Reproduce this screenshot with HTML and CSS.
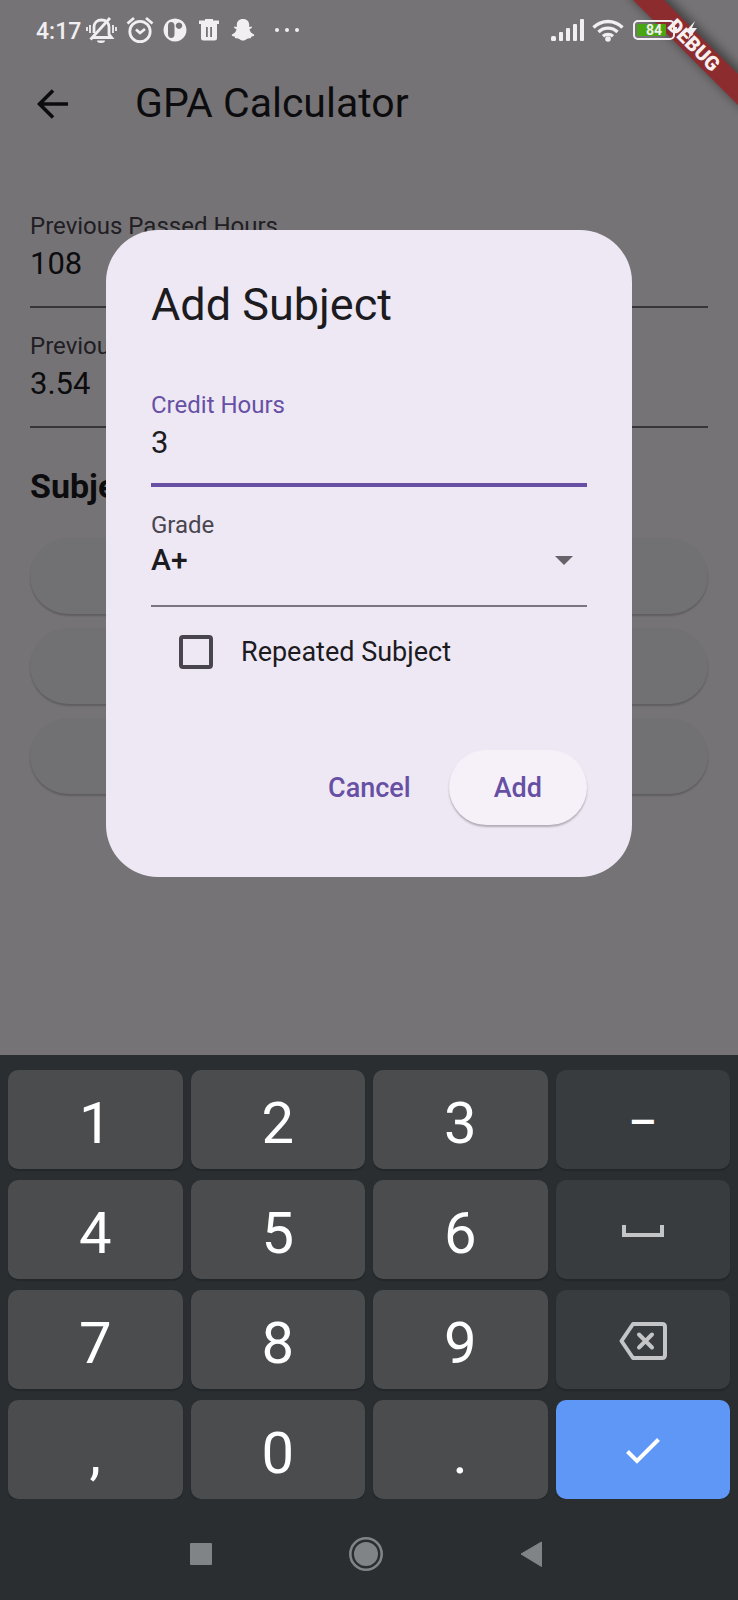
FILE: index.html
```html
<!DOCTYPE html>
<html lang="en">
<head>
<meta charset="utf-8">
<meta name="viewport" content="width=device-width, initial-scale=1">
<title>GPA Calculator</title>
<link rel="stylesheet" href="styles.css">
</head>
<body>
<div class="phone">
  <div class="app">
    <main class="screen">
      <header class="appbar">
        <button class="back" type="button" aria-label="Back">
          <svg width="32" height="30" viewBox="0 0 32 30" fill="none" stroke="currentColor" stroke-width="3.6"><path d="M31 15H3M16 1.5L2.5 15 16 28.5"/></svg>
        </button>
        <h1 class="appbar-title">GPA Calculator</h1>
      </header>
      <div class="content">
        <div class="field">
          <label class="field-label" for="hours">Previous Passed Hours</label>
          <input class="field-input" id="hours" type="text" value="108">
        </div>
        <div class="field">
          <label class="field-label" for="gpa">Previous GPA</label>
          <input class="field-input" id="gpa" type="text" value="3.54">
        </div>
        <h2 class="section-title">Subjects</h2>
        <div class="pills">
          <button class="pill" type="button" aria-label="Add subject"></button>
          <button class="pill" type="button" aria-label="Calculate"></button>
          <button class="pill" type="button" aria-label="Reset"></button>
        </div>
      </div>
    </main>

    <div class="scrim">
      <form class="dialog" role="dialog" aria-labelledby="dialog-title">
        <h2 class="dialog-title" id="dialog-title">Add Subject</h2>
        <div class="field field-active">
          <label class="field-label" for="credit">Credit Hours</label>
          <input class="field-input" id="credit" type="text" value="3">
        </div>
        <div class="field field-grade">
          <label class="field-label" for="grade">Grade</label>
          <div class="select-row">
            <select class="field-select" id="grade"><option>A+</option><option>A</option><option>B+</option></select>
            <svg class="caret" width="18" height="10" viewBox="0 0 18 10"><path d="M0 0h18L9 9z" fill="#676169"/></svg>
          </div>
        </div>
        <label class="check-row" for="repeated">
          <input class="check" id="repeated" type="checkbox">
          <span>Repeated Subject</span>
        </label>
        <div class="actions">
          <button class="btn btn-text" type="button">Cancel</button>
          <button class="btn btn-raised" type="button">Add</button>
        </div>
      </form>
    </div>

    <svg class="ribbon" width="120" height="120" viewBox="0 0 120 120">
      <defs><filter id="soft" x="-20%" y="-20%" width="140%" height="140%"><feGaussianBlur stdDeviation="5"/></filter></defs>
      <path d="M8 -7L46 -7 127 74 127 112z" fill="#000" opacity=".4" filter="url(#soft)"/>
      <path d="M15 0H46L120 74V105z" fill="#8d2c2f"/>
      <text class="ribbon-text" x="0" y="7" text-anchor="middle" transform="translate(76 45) rotate(45)">DEBUG</text>
    </svg>

    <div class="statusbar">
      <span class="clock">4:17</span>
      <svg width="32" height="28" viewBox="0 0 32 28" fill="none" stroke="currentColor" stroke-width="2.8">
        <path d="M7 21.5h19.5L24 18.5V11c0-4-3-7-7.500-7S9 7 9 11v6" /><path d="M5.500 23.500L25 2"/><path d="M12 24.500a4 2.500 0 0 0 8 0z" fill="currentColor" stroke="none"/>
        <path d="M5 9v8M2 11v4M28 9v8M31 11v4" stroke-width="1.800"/>
      </svg>
      <svg class="st-alarm" width="28" height="28" viewBox="0 0 28 28" fill="none" stroke="currentColor" stroke-width="2.800">
        <circle cx="14" cy="15.500" r="10.200"/><path d="M10 13.500l4 3.500 5-4M1.500 7.500L8 2M26.500 7.500L20 2"/>
      </svg>
      <svg class="st-p" width="24" height="24" viewBox="0 0 24 24">
        <path fill="currentColor" fill-rule="evenodd" d="M12 0.500a11.500 11.500 0 1 0 .01 0zM5 8q0-4 3.200-4T11.500 8v8q0 4-3.200 4T5 16zM16 4.500a3.200 3.200 0 1 1-.01 0z"/>
      </svg>
      <svg class="st-trash" width="20" height="22" viewBox="0 0 20 22">
        <path fill="currentColor" fill-rule="evenodd" d="M0 1.500h6V0h8v1.500h6V5H0zM2 5h16V19q0 2.500-2.500 2.500h-11Q2 21.500 2 19zM7 8v10h1.800V8zM11.200 8v10H13V8z"/>
      </svg>
      <svg class="st-ghost" width="24" height="22" viewBox="0 0 24 22">
        <path fill="currentColor" d="M12 0C8 0 5.800 2.600 5.800 6v2L3.500 7.500C2.500 8 3 9.500 5.500 10.300 5 13 3.500 14.500 1 15.500c-.8.700 0 1.700 2.500 2l.8 1.800c1.700-.3 3 0 4.300 1 1.800 1.700 5 1.700 6.800 0 1.300-1 2.600-1.300 4.300-1l.8-1.800c2.500-.3 3.300-1.300 2.500-2-2.500-1-4-2.500-4.500-5.200 2.500-.8 3-2.300 2-2.800L18.200 8V6C18.200 2.600 16 0 12 0z"/>
      </svg>
      <svg class="st-dots" width="26" height="6" viewBox="0 0 26 6" fill="currentColor"><circle cx="3" cy="3" r="2"/><circle cx="13" cy="3" r="2"/><circle cx="23" cy="3" r="2"/></svg>
      <svg class="st-signal" width="34" height="22" viewBox="0 0 34 22" fill="currentColor">
        <rect x="0" y="17" width="5" height="5" rx="1.500"/><rect x="8" y="13" width="4" height="9" rx="1"/><rect x="15" y="9" width="4" height="13" rx="1"/><rect x="22" y="5" width="4" height="17" rx="1"/><rect x="29" y="0" width="4" height="22" rx="1"/>
      </svg>
      <svg class="st-wifi" width="32" height="24" viewBox="0 0 32 24" fill="none" stroke="currentColor" stroke-width="3.400">
        <path d="M1.500 9.500a20.500 20.500 0 0 1 29 0M6.500 14a13.500 13.500 0 0 1 19 0M11 18.300a7.500 7.500 0 0 1 10 0"/><circle cx="16" cy="21" r="2.800" fill="currentColor" stroke="none"/>
      </svg>
      <svg class="st-battery" width="66" height="24" viewBox="0 0 66 24">
        <rect x="1" y="3" width="40" height="18" rx="4" fill="none" stroke="currentColor" stroke-width="2"/>
        <rect x="4" y="6" width="29" height="12" rx="1" fill="#49a512"/>
        <path d="M42 9v6h2V9z" fill="currentColor"/>
        <text class="battery-text" x="21" y="17" text-anchor="middle">84</text>
        <path d="M62 3L52 14h5l-2 8 9-12h-5z" fill="currentColor"/>
      </svg>
    </div>
  </div>

  <div class="keyboard">
    <button class="key" type="button">1</button>
    <button class="key" type="button">2</button>
    <button class="key" type="button">3</button>
    <button class="key key-dark" type="button">–</button>
    <button class="key" type="button">4</button>
    <button class="key" type="button">5</button>
    <button class="key" type="button">6</button>
    <button class="key key-dark key-icon" type="button" aria-label="Space">
      <svg width="42" height="12" viewBox="0 0 42 12" fill="none" stroke="#c3c5c7" stroke-width="4"><path d="M2 0v10h38V0"/></svg>
    </button>
    <button class="key" type="button">7</button>
    <button class="key" type="button">8</button>
    <button class="key" type="button">9</button>
    <button class="key key-dark key-icon" type="button" aria-label="Backspace">
      <svg width="48" height="38" viewBox="0 0 48 38" fill="none" stroke="#c3c5c7" stroke-width="4" stroke-linejoin="round"><path d="M14 2h29q3 0 3 3v28q0 3-3 3H14L2.500 19z"/><path d="M20 12.500l13 13M33 12.500l-13 13" stroke-linecap="round"/></svg>
    </button>
    <button class="key" type="button">,</button>
    <button class="key" type="button">0</button>
    <button class="key" type="button">.</button>
    <button class="key key-done key-icon" type="button" aria-label="Done">
      <svg width="34" height="26" viewBox="0 0 34 26" fill="none" stroke="#fff" stroke-width="4"><path d="M1.500 13.500L11 23 32.500 1.500"/></svg>
    </button>
  </div>

  <nav class="navbar">
    <button class="nav-btn" type="button" aria-label="Recents"><svg width="22" height="22" viewBox="0 0 22 22"><rect width="22" height="22" rx="1" fill="currentColor"/></svg></button>
    <button class="nav-btn" type="button" aria-label="Home"><svg width="34" height="34" viewBox="0 0 34 34"><circle cx="17" cy="17" r="15.700" fill="none" stroke="currentColor" stroke-width="2.600"/><circle cx="17" cy="17" r="12" fill="currentColor"/></svg></button>
    <button class="nav-btn" type="button" aria-label="Back"><svg width="22" height="26" viewBox="0 0 22 26"><path d="M21.500 1v24.500L1 13z" fill="currentColor" stroke="currentColor" stroke-linejoin="round"/></svg></button>
  </nav>
</div>
</body>
</html>
```
FILE: styles.css
```css
* { box-sizing: border-box; }

body {
  margin: 0;
  font-family: Roboto, "Liberation Sans", sans-serif;
  background: #2a2e31;
}

button, input, select { font-family: inherit; margin: 0; }
svg { display: block; flex: none; }
h1, h2 { margin: 0; font-weight: 400; }

.phone {
  display: flex;
  flex-direction: column;
  min-height: 100vh;
}

.app {
  position: relative;
  flex: 1;
  display: grid;
  background: #fffbff;
}

.screen, .scrim { grid-area: 1 / 1; }

/* Status bar */
.statusbar {
  position: absolute;
  top: 0;
  left: 0;
  right: 0;
  height: 60px;
  padding: 0 39px 0 36px;
  display: flex;
  align-items: center;
  color: #f1eff1;
}
.clock {
  font-size: 23px;
  font-weight: 500;
  width: 49px;
  padding-top: 2px;
}
.st-alarm { margin-left: 9px; }
.st-p { margin-left: 9px; }
.st-trash { margin-left: 12px; }
.st-ghost { margin-left: 12px; }
.st-dots { margin-left: 19px; }
.st-signal { margin-left: auto; }
.st-wifi { margin-left: 7px; }
.st-battery { margin-left: 9px; }
.battery-text { font-size: 14px; font-weight: 700; fill: #f1eff1; }

.ribbon {
  position: absolute;
  top: 0;
  right: 0;
}
.ribbon-text { font-size: 20px; font-weight: 900; fill: #f6f0f0; }

/* Page */
.screen { padding-top: 60px; }
.appbar {
  display: flex;
  align-items: center;
  gap: 66px;
  height: 88px;
  padding: 0 37px;
}
.back {
  border: 0;
  padding: 0;
  background: none;
  color: #1c1b1f;
}
.appbar-title { font-size: 41px; line-height: 52px; color: #1c1b1f; padding-bottom: 2px; }
.content { padding: 42px 30px 0; }

.field {
  display: flex;
  flex-direction: column;
  margin-bottom: 2px;
  padding: 23px 0 25px;
  border-bottom: 2px solid #79747e;
}
.field-label {
  font-size: 24px;
  line-height: 26px;
  color: #49454f;
  margin-bottom: 6px;
}
.field-input, .field-select {
  width: 100%;
  height: 36px;
  padding: 0;
  border: 0;
  outline: 0;
  background: none;
  font-size: 31px;
  color: #1c1b1f;
}
.section-title {
  margin: 38px 0 32px;
  font-size: 34px;
  line-height: 40px;
  font-weight: 700;
  color: #1c1b1f;
}
.pills { display: grid; gap: 14px; }
.pill {
  height: 76px;
  border: 0;
  border-radius: 38px;
  background: #f7f3f8;
  box-shadow: 0 2px 2px rgba(0, 0, 0, .2);
}

/* Dialog */
.scrim {
  position: relative;
  display: flex;
  align-items: center;
  padding: 52px 106px 0;
  background: rgba(0, 0, 0, .54);
}
.dialog {
  flex: 1;
  padding: 46px 45px 52px;
  border-radius: 52px;
  background: #eee8f4;
}
.dialog-title {
  margin-bottom: 35px;
  font-size: 45px;
  line-height: 58px;
  color: #1c1b1f;
}
.field-active { padding-bottom: 23px; border-bottom: 4px solid #6750a4; }
.field-active .field-label { color: #6750a4; }
.field-grade .field-label { margin-bottom: 3px; }
.field-grade { padding-bottom: 28px; }
.select-row { display: flex; align-items: center; padding-right: 14px; }
.caret { margin-top: 4px; }
.field-select { appearance: none; flex: 1; font-size: 30px; font-weight: 500; }
.check-row {
  display: flex;
  align-items: center;
  gap: 28px;
  height: 86px;
  padding-left: 28px;
  font-size: 27px;
  color: #1c1b1f;
}
.check {
  appearance: none;
  width: 34px;
  height: 34px;
  border: 4px solid #49454f;
  border-radius: 4px;
}
.actions {
  display: flex;
  justify-content: flex-end;
  gap: 15px;
  margin-top: 55px;
}
.btn {
  height: 75px;
  border: 0;
  border-radius: 38px;
  background: none;
  font-size: 27px;
  font-weight: 500;
  color: #6750a4;
}
.btn-text { padding: 0 23px; }
.btn-raised {
  padding: 0 45px;
  background: #f6f1f9;
  box-shadow: 0 2px 2px rgba(0, 0, 0, .26);
}

/* Keyboard */
.keyboard {
  display: grid;
  grid-template-columns: repeat(4, 1fr);
  grid-auto-rows: 99px;
  gap: 11px 8px;
  padding: 15px 8px 0;
  background: #2a2e31;
}
.key {
  display: flex;
  align-items: center;
  justify-content: center;
  padding: 6px 0 0;
  border: 0;
  border-radius: 10px;
  background: #4a4c4e;
  box-shadow: 0 2px 1px #23272a;
  font-size: 58px;
  color: #fff;
}
.key-dark { background: #383c3f; font-size: 44px; font-weight: 500; }
.key-done { background: #5f97f6; }
.key-icon { padding: 3px 0 0; }

/* System navigation */
.navbar {
  display: flex;
  justify-content: center;
  gap: 121px;
  padding: 33px 6px 24px 0;
  background: #2a2e31;
}
.nav-btn {
  display: flex;
  align-items: center;
  justify-content: center;
  width: 44px;
  height: 44px;
  padding: 0;
  border: 0;
  background: none;
  color: #808486;
}
```
